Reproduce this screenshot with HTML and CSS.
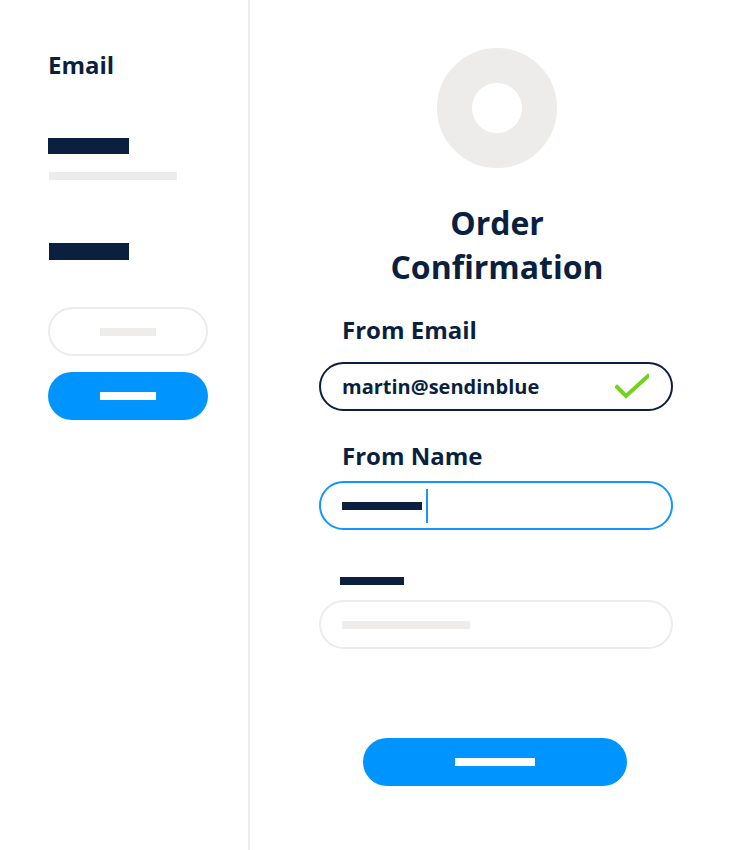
FILE: index.html
```html
<!DOCTYPE html>
<html lang="en">
<head>
<meta charset="utf-8">
<title>Order Confirmation</title>
<link rel="stylesheet" href="styles.css">
</head>
<body>
<div class="page">
  <aside class="sidebar">
    <div class="side-title">Email</div>
    <div class="bar bar-dark side-bar-1"></div>
    <div class="bar bar-light side-bar-2"></div>
    <div class="bar bar-dark side-bar-3"></div>
    <div class="pill pill-outline side-btn-1"><span class="bar bar-light pill-bar"></span></div>
    <div class="pill pill-blue side-btn-2"><span class="bar bar-white pill-bar"></span></div>
  </aside>
  <main class="main">
    <div class="avatar"></div>
    <h1 class="title">Order<br>Confirmation</h1>
    <form class="form">
      <label class="label label-email">From Email</label>
      <div class="field field-valid">
        <span class="field-text">martin@sendinblue</span>
        <svg class="check" width="34" height="26" viewBox="0 0 34 26" aria-hidden="true">
          <polyline points="2,14 11,23 33,3" fill="none" stroke="#72d21c" stroke-width="4" stroke-linecap="square"/>
        </svg>
      </div>
      <label class="label label-name">From Name</label>
      <div class="field field-focus">
        <span class="bar bar-dark field-bar"></span>
        <span class="cursor"></span>
      </div>
      <div class="bar bar-dark form-bar"></div>
      <div class="field field-empty">
        <span class="bar bar-light empty-bar"></span>
      </div>
      <div class="pill pill-blue submit"><span class="bar bar-white submit-bar"></span></div>
    </form>
  </main>
</div>
</body>
</html>
```
FILE: styles.css
```css
* { box-sizing: border-box; }

html, body {
  margin: 0;
  padding: 0;
  background: #ffffff;
}

body {
  font-family: "Open Sans", "Liberation Sans", sans-serif;
  font-weight: 700;
  color: #0b1f3f;
}

.page {
  display: flex;
  width: 746px;
  height: 850px;
  overflow: hidden;
}

.sidebar {
  width: 250px;
  flex: 0 0 250px;
  border-right: 2px solid #eeedeb;
  padding: 49px 0 0 48px;
  display: flex;
  flex-direction: column;
  align-items: flex-start;
}

.side-title {
  font-size: 24px;
  line-height: 32px;
}

.bar { display: block; }
.bar-dark { background: #0b1f3f; }
.bar-light { background: #eeedeb; }
.bar-white { background: #ffffff; }

.side-bar-1 { width: 81px; height: 16px; margin-top: 57px; }
.side-bar-2 { width: 128px; height: 8px; margin-top: 18px; margin-left: 1px; }
.side-bar-3 { width: 80px; height: 17px; margin-top: 63px; margin-left: 1px; }

.pill {
  display: flex;
  align-items: center;
  justify-content: center;
  border-radius: 999px;
}
.pill-outline { border: 2px solid #ececec; background: #fff; }
.pill-blue { background: #0094ff; }

.side-btn-1 { width: 160px; height: 49px; margin-top: 47px; }
.side-btn-2 { width: 160px; height: 48px; margin-top: 16px; }
.pill-bar { width: 56px; height: 8px; }

.main {
  flex: 1;
  display: flex;
  flex-direction: column;
  align-items: center;
  padding: 48px 4px 0 0;
}

.avatar {
  width: 120px;
  height: 120px;
  border-radius: 50%;
  border: 35px solid #edeceb;
  background: #fff;
  margin-left: 2px;
}

.title {
  margin: 33px 0 2px 2px;
  font-size: 32px;
  line-height: 44px;
  font-weight: 700;
  text-align: center;
}

.form {
  width: 354px;
  display: flex;
  flex-direction: column;
  align-items: flex-start;
  margin: 0;
}

.label {
  display: block;
  font-size: 24px;
  line-height: 32px;
  padding-left: 23px;
}
.label-email { margin-top: 23px; }
.label-name { margin-top: 29px; }

.field {
  width: 354px;
  height: 49px;
  border-radius: 999px;
  border: 2px solid #0b1f3f;
  display: flex;
  align-items: center;
  padding: 0 22px 0 21px;
}
.field-valid { margin-top: 16px; justify-content: space-between; }
.field-focus { margin-top: 9px; border-color: #1596ff; }
.field-empty { margin-top: 15px; border-color: #ececec; }

.field-text {
  font-size: 20px;
}

.check { display: block; margin-top: -2px; }

.field-bar { width: 80px; height: 8px; }
.cursor {
  width: 2px;
  height: 34px;
  margin-left: 4px;
  background: #1596ff;
}

.form-bar {
  width: 64px;
  height: 8px;
  margin: 47px 0 0 21px;
}

.empty-bar { width: 128px; height: 8px; }

.submit {
  width: 264px;
  height: 48px;
  margin: 89px 0 0 44px;
}
.submit-bar { width: 80px; height: 8px; }
```
